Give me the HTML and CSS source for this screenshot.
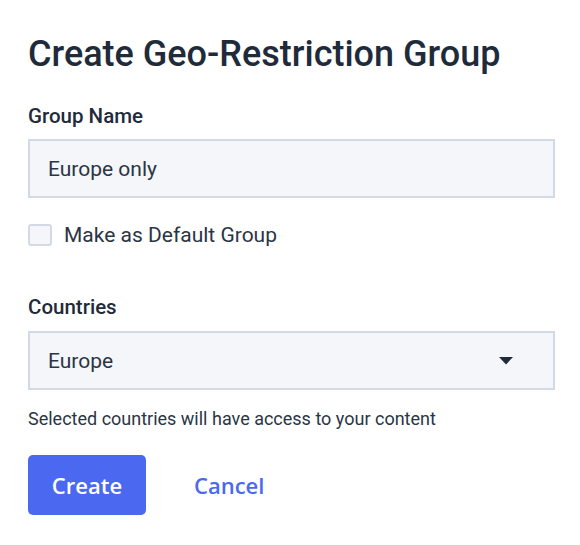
FILE: index.html
```html
<!DOCTYPE html>
<html>
<head>
<meta charset="utf-8">
<link rel="stylesheet" href="styles.css">
</head>
<body>
<div class="dialog">
  <h1 class="title">Create Geo-Restriction Group</h1>
  <div class="label label-first">Group Name</div>
  <div class="field">Europe only</div>
  <label class="check-row">
    <span class="checkbox"></span>
    <span class="check-text">Make as Default Group</span>
  </label>
  <div class="label label-countries">Countries</div>
  <div class="field select">
    <span>Europe</span>
    <svg class="caret" width="14" height="8" viewBox="0 0 14 8"><path d="M0 0H14L7 7.5Z" fill="#1f2b3a"/></svg>
  </div>
  <p class="help">Selected countries will have access to your content</p>
  <div class="actions">
    <button class="btn-primary">Create</button>
    <button class="btn-link">Cancel</button>
  </div>
</div>
</body>
</html>
```
FILE: styles.css
```css
html, body {
  margin: 0;
  padding: 0;
  background: #ffffff;
}
.dialog {
  padding: 33px 25px 0 28px;
  font-family: Roboto, "Noto Sans", sans-serif;
  color: #1f2b3a;
  width: 527px;
}
.title {
  margin: 0;
  font-size: 36px;
  line-height: 42px;
  font-weight: 500;
  letter-spacing: 0;
}
.label {
  font-size: 20.5px;
  line-height: 24px;
  font-weight: 500;
}
.label-first {
  margin-top: 29px;
}
.field {
  margin-top: 11px;
  box-sizing: border-box;
  height: 59px;
  border: 2px solid #d3d9e6;
  background: #f5f6fa;
  padding: 0 18px;
  display: flex;
  align-items: center;
  font-size: 21px;
  color: #2a3545;
}
.check-row {
  margin-top: 26px;
  display: flex;
  align-items: center;
  gap: 12px;
  height: 22px;
}
.checkbox {
  box-sizing: border-box;
  width: 24px;
  height: 22px;
  border: 2px solid #d3d9e6;
  background: #f5f6fa;
  border-radius: 3px;
}
.check-text {
  font-size: 21px;
  line-height: 22px;
  color: #2a3545;
}
.label-countries {
  margin-top: 49px;
}
.select {
  margin-top: 12px;
  justify-content: space-between;
  padding-right: 40px;
}
.caret {
  display: block;
}
.help {
  margin: 18px 0 0 0;
  font-size: 18px;
  line-height: 22px;
  color: #2a3545;
}
.actions {
  margin-top: 25px;
  display: flex;
  align-items: center;
  gap: 48px;
}
.btn-primary {
  width: 118px;
  height: 60px;
  border: none;
  border-radius: 5px;
  background: #4a69f0;
  color: #ffffff;
  font-family: "Open Sans", "Noto Sans", sans-serif;
  font-size: 22px;
  font-weight: 600;
  padding: 0;
}
.btn-link {
  border: none;
  background: none;
  padding: 0;
  color: #4a69f0;
  font-family: "Open Sans", "Noto Sans", sans-serif;
  font-size: 22px;
  font-weight: 600;
}
```
